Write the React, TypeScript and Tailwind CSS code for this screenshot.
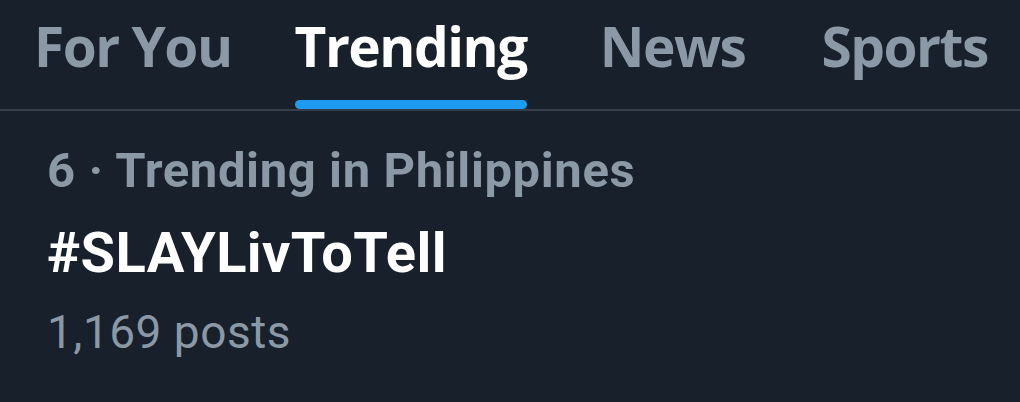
export default function App() {
  const tabs = [
    { label: 'For You', spacing: '' },
    { label: 'Trending', spacing: 'ml-[63px]' },
    { label: 'News', spacing: 'ml-[73px]' },
    { label: 'Sports', spacing: 'ml-[76px]' },
  ];
  const active = 'Trending';

  return (
    <div className="w-[1020px] h-[402px] bg-[#18202b] overflow-hidden" style={{ fontFamily: 'Roboto, "Liberation Sans", sans-serif' }}>
      {/* Tabs */}
      <div className="flex items-end pl-[34px] border-b-2 border-[#343f4a] h-[111px]">
        {tabs.map((tab) => (
          <div key={tab.label} className={`flex flex-col items-stretch ${tab.spacing}`}>
            <span
              className={`text-[55px] font-bold leading-none tracking-[-1.5px] font-['Open_Sans',sans-serif] ${
                tab.label === active ? 'text-white' : 'text-[#8b98a5]'
              }`}
            >
              {tab.label}
            </span>
            <div
              className={`h-[9px] mt-[27px] rounded-full ${
                tab.label === active ? 'bg-[#1d9bf0]' : 'bg-transparent'
              }`}
            />
          </div>
        ))}
      </div>

      {/* Trend item */}
      <div className="pl-[47px] pt-[30px] flex flex-col">
        <span className="text-[49px] font-bold leading-[60px] text-[#8b98a5] tracking-[0.6px]">
          6 · Trending in Philippines
        </span>
        <span className="mt-[16px] text-[56px] font-bold leading-[72px] text-white tracking-[0.4px]">
          #SLAYLivToTell
        </span>
        <span className="mt-[13px] text-[46px] leading-[60px] text-[#8b98a5] tracking-[0.5px]">1,169 posts</span>
      </div>
    </div>
  );
}
